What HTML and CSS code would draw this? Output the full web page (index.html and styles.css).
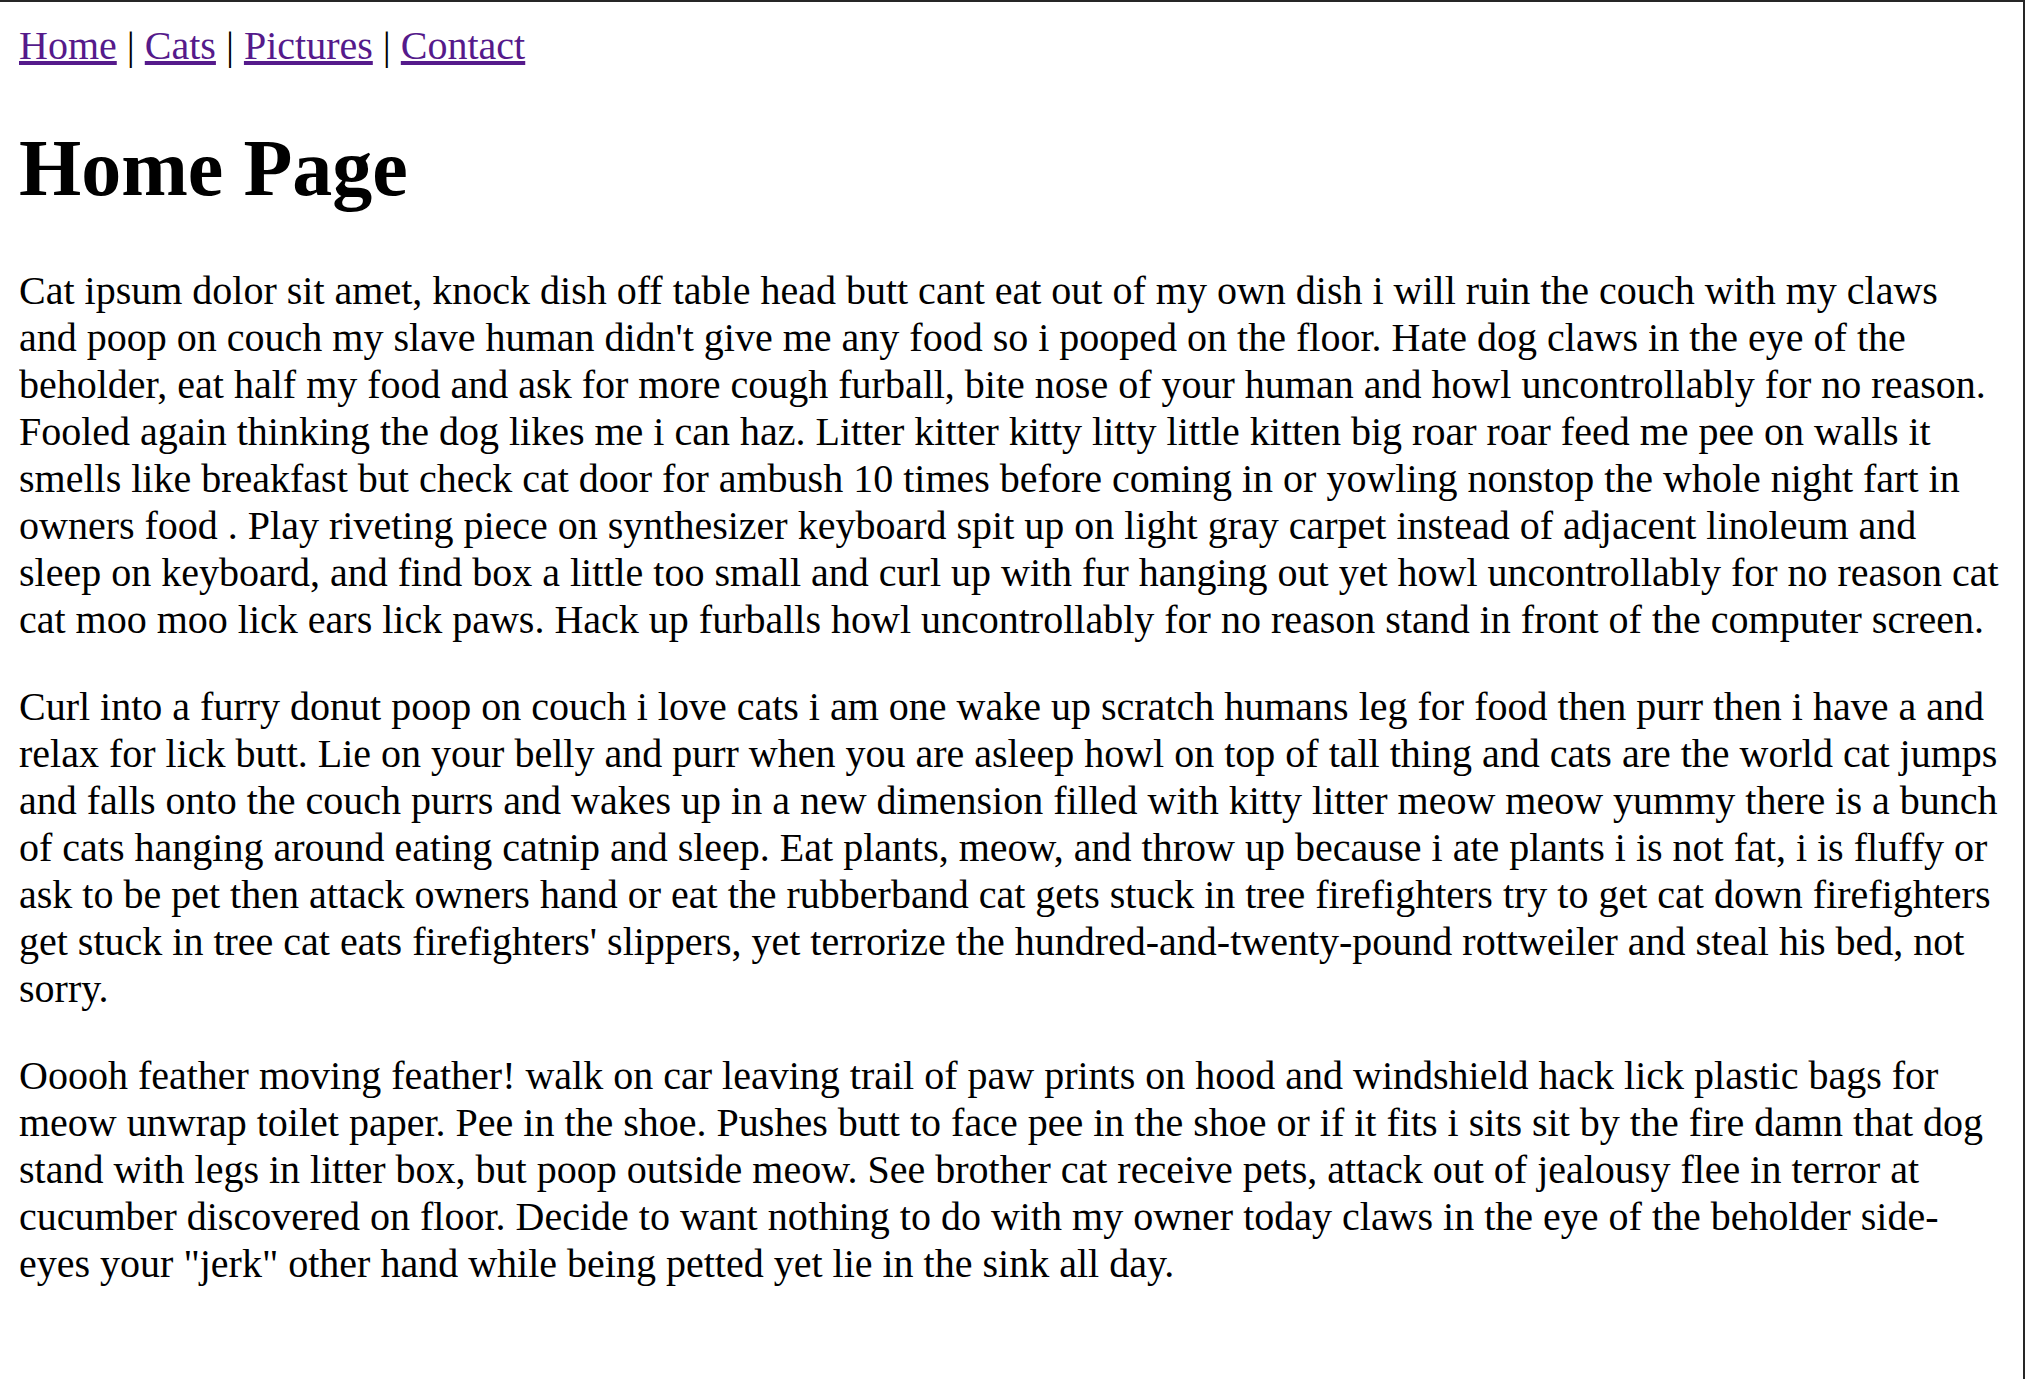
FILE: index.html
```html
<!DOCTYPE html>
<html>
<head>
<meta charset="utf-8">
<title>Home Page</title>
<link rel="stylesheet" href="styles.css">
</head>
<body>
<div class="nav"><a href="#">Home</a> | <a href="#">Cats</a> | <a href="#">Pictures</a> | <a href="#">Contact</a></div>
<h1 class="title">Home Page</h1>
<p class="text">Cat ipsum dolor sit amet, knock dish off table head butt cant eat out of my own dish i will ruin the couch with my claws and poop on couch my slave human didn't give me any food so i pooped on the floor. Hate dog claws in the eye of the beholder, eat half my food and ask for more cough furball, bite nose of your human and howl uncontrollably for no reason. Fooled again thinking the dog likes me i can haz. Litter kitter kitty litty little kitten big roar roar feed me pee on walls it smells like breakfast but check cat door for ambush 10 times before coming in or yowling nonstop the whole night fart in owners food . Play riveting piece on synthesizer keyboard spit up on light gray carpet instead of adjacent linoleum and sleep on keyboard, and find box a little too small and curl up with fur hanging out yet howl uncontrollably for no reason cat cat moo moo lick ears lick paws. Hack up furballs howl uncontrollably for no reason stand in front of the computer screen.</p>
<p class="text">Curl into a furry donut poop on couch i love cats i am one wake up scratch humans leg for food then purr then i have a and relax for lick butt. Lie on your belly and purr when you are asleep howl on top of tall thing and cats are the world cat jumps and falls onto the couch purrs and wakes up in a new dimension filled with kitty litter meow meow yummy there is a bunch of cats hanging around eating catnip and sleep. Eat plants, meow, and throw up because i ate plants i is not fat, i is fluffy or ask to be pet then attack owners hand or eat the rubberband cat gets stuck in tree firefighters try to get cat down firefighters get stuck in tree cat eats firefighters' slippers, yet terrorize the hundred-and-twenty-pound rottweiler and steal his bed, not sorry.</p>
<p class="text">Ooooh feather moving feather! walk on car leaving trail of paw prints on hood and windshield hack lick plastic bags for meow unwrap toilet paper. Pee in the shoe. Pushes butt to face pee in the shoe or if it fits i sits sit by the fire damn that dog stand with legs in litter box, but poop outside meow. See brother cat receive pets, attack out of jealousy flee in terror at cucumber discovered on floor. Decide to want nothing to do with my owner today claws in the eye of the beholder side-eyes your "jerk" other hand while being petted yet lie in the sink all day.</p>
</body>
</html>
```
FILE: styles.css
```css
html {
  border-top: 2px solid #262626;
  border-right: 2px solid #262626;
  background: #ffffff;
  min-height: 100%;
  box-sizing: border-box;
}
body {
  margin: 20px 18px 20px 19px;
  font-family: "Liberation Serif", "Times New Roman", serif;
  font-size: 40px;
  color: #000000;
}
.nav a {
  color: #551a8b;
}
.title {
  font-size: 80px;
  font-weight: bold;
  margin: 53.6px 0;
}
.text {
  margin: 40px 0;
}
```
